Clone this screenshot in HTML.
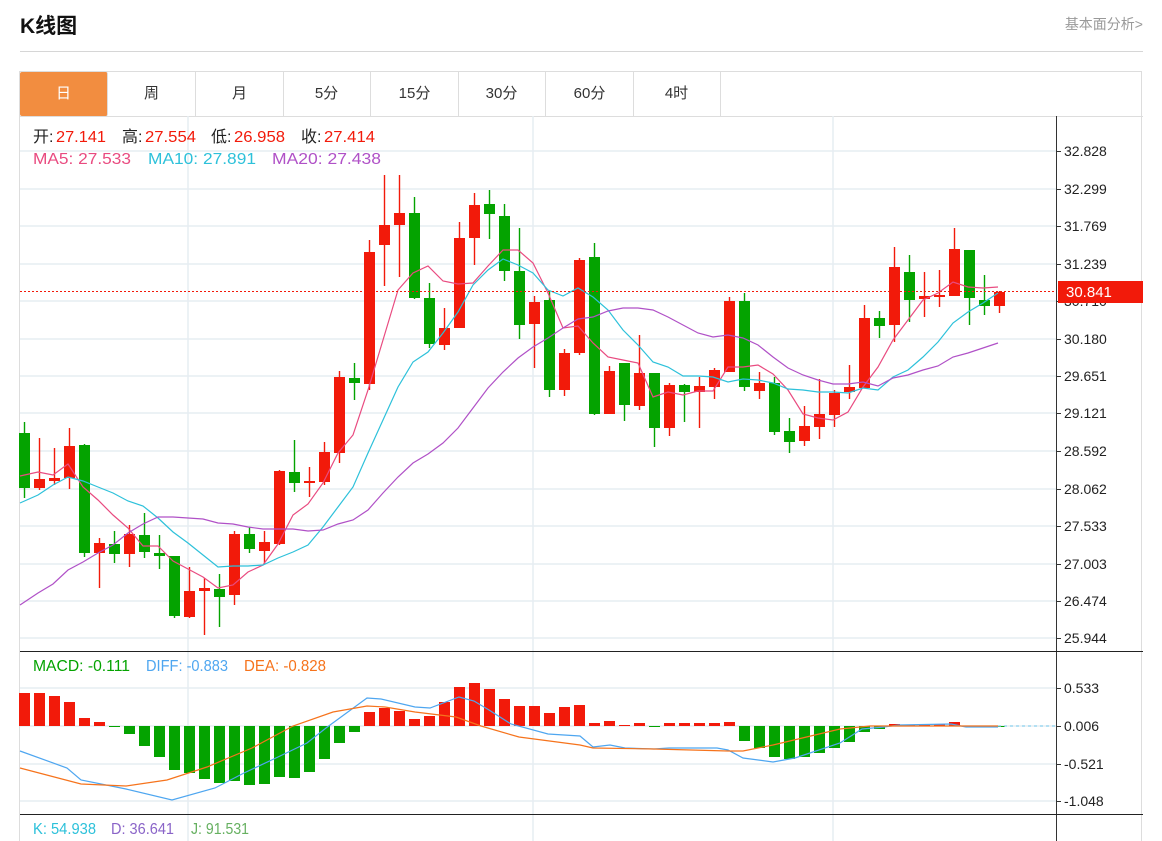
<!DOCTYPE html>
<html><head><meta charset="utf-8">
<style>
body{margin:0;background:#fff;font-family:"Liberation Sans","Noto Sans CJK SC",sans-serif;}
#wrap{position:relative;width:1162px;height:841px;overflow:hidden;}
.title{position:absolute;left:20px;top:10px;font-size:21px;font-weight:bold;color:#111;}
.more{position:absolute;right:19px;top:14px;font-size:14px;color:#999;}
.hr{position:absolute;left:20px;top:51px;width:1123px;height:1px;background:#d6d6d6;}
.box{position:absolute;left:19px;top:71px;width:1123px;height:780px;border:1px solid #ddd;box-sizing:border-box;}
.tabs{position:absolute;left:20px;top:72px;height:44px;}
.tab{position:absolute;top:0;width:87px;height:44px;line-height:44px;text-align:center;font-size:15px;color:#333;border-right:1px solid #ddd;}
.tab.on{background:#f28d40;color:#fff;border-radius:2px;}
svg{position:absolute;left:0;top:0;}
</style></head><body><div id="wrap">
<div class="title">K线图</div>
<div class="more">基本面分析&gt;</div>
<div class="hr"></div>
<div class="box"></div>
<div class="tabs">
<div class="tab on" style="left:0">日</div>
<div class="tab" style="left:88px">周</div>
<div class="tab" style="left:176px">月</div>
<div class="tab" style="left:263px">5分</div>
<div class="tab" style="left:351px">15分</div>
<div class="tab" style="left:438px">30分</div>
<div class="tab" style="left:526px">60分</div>
<div class="tab" style="left:613px">4时</div>
</div>
<svg id="s" width="1162" height="841" xmlns="http://www.w3.org/2000/svg" font-family="Liberation Sans, Noto Sans CJK SC, sans-serif">
<line x1="20" y1="116.5" x2="1143" y2="116.5" stroke="#ddd"/>
<g id="grid" stroke="#e6edf2" stroke-width="1.5"></g>
<g id="cand"></g>
<g id="lines" fill="none" stroke-width="1.2"></g>
<line x1="20" y1="291.5" x2="1056" y2="291.5" stroke="#f21a0a" stroke-dasharray="2,2"/>
<line x1="1056.5" y1="116" x2="1056.5" y2="841" stroke="#333"/>
<line x1="20" y1="651.5" x2="1143" y2="651.5" stroke="#222"/>
<line x1="20" y1="814.5" x2="1143" y2="814.5" stroke="#222"/>
<g id="axis" font-size="14" fill="#222"></g>
<rect x="1058" y="281" width="85" height="22" fill="#f21a0a"/>
<text x="1066" y="297" font-size="15" fill="#fff">30.841</text>
<g font-size="16">
<text x="33" y="142" fill="#222">开:</text><text x="56" y="142" fill="#f21a0a" textLength="50" lengthAdjust="spacingAndGlyphs">27.141</text>
<text x="122" y="142" fill="#222">高:</text><text x="145" y="142" fill="#f21a0a" textLength="51" lengthAdjust="spacingAndGlyphs">27.554</text>
<text x="211" y="142" fill="#222">低:</text><text x="234" y="142" fill="#f21a0a" textLength="51" lengthAdjust="spacingAndGlyphs">26.958</text>
<text x="301" y="142" fill="#222">收:</text><text x="324" y="142" fill="#f21a0a" textLength="51" lengthAdjust="spacingAndGlyphs">27.414</text>
<text x="33" y="164" fill="#e94b80" textLength="98" lengthAdjust="spacingAndGlyphs">MA5: 27.533</text>
<text x="148" y="164" fill="#2dc1da" textLength="108" lengthAdjust="spacingAndGlyphs">MA10: 27.891</text>
<text x="272" y="164" fill="#b051c7" textLength="109" lengthAdjust="spacingAndGlyphs">MA20: 27.438</text>
<text x="33" y="671" fill="#04a300" textLength="97" lengthAdjust="spacingAndGlyphs">MACD: -0.111</text>
<text x="146" y="671" fill="#4ea6f0" textLength="82" lengthAdjust="spacingAndGlyphs">DIFF: -0.883</text>
<text x="244" y="671" fill="#f6731c" textLength="82" lengthAdjust="spacingAndGlyphs">DEA: -0.828</text>
<text x="33" y="834" fill="#2dc1da" textLength="63" lengthAdjust="spacingAndGlyphs">K: 54.938</text>
<text x="111" y="834" fill="#8a64c8" textLength="63" lengthAdjust="spacingAndGlyphs">D: 36.641</text>
<text x="191" y="834" fill="#66b060" textLength="58" lengthAdjust="spacingAndGlyphs">J: 91.531</text>
</g>
</svg>
<script>
var NS="http://www.w3.org/2000/svg";
function el(p,t,a){var e=document.createElementNS(NS,t);for(var k in a)e.setAttribute(k,a[k]);p.appendChild(e);return e;}
var g=document.getElementById('grid');
[151,189,226,264,301,339,376,413,451,489,526,564,601,638,688,726,764,801].forEach(function(y){el(g,'line',{x1:20,y1:y,x2:1056,y2:y});});
[188,533,833].forEach(function(x){el(g,'line',{x1:x,y1:116,x2:x,y2:841});});
var ax=document.getElementById('axis');
[[151,'32.828'],[189,'32.299'],[226,'31.769'],[264,'31.239'],[301,'30.710'],[339,'30.180'],[376,'29.651'],[413,'29.121'],[451,'28.592'],[489,'28.062'],[526,'27.533'],[564,'27.003'],[601,'26.474'],[638,'25.944'],[688,'0.533'],[726,'0.006'],[764,'-0.521'],[801,'-1.048']].forEach(function(a){
 el(ax,'line',{x1:1056,y1:a[0]+.5,x2:1061,y2:a[0]+.5,stroke:'#333'});var t=el(ax,'text',{x:1064,y:a[0]+5});t.textContent=a[1];});
var R='#f21a0a',G='#04a300';
var C=[[G,433,488,422,498],[R,479,488,438,490],[R,478,481,448,485],[R,446,478,428,489],[G,445,553,444,557],[R,543,553,538,588],[G,544,554,531,563],[R,534,554,525,567],[G,535,552,513,558],[G,553,556,535,569],[G,556,616,556,618],[R,591,617,567,618],[R,588,591,578,635],[G,589,597,574,627],[R,534,595,531,605],[G,534,549,527,553],[R,542,551,531,564],[R,471,544,470,545],[G,472,483,440,492],[R,481,482,467,497],[R,452,482,442,485],[R,377,453,371,463],[G,378,383,363,400],[R,252,384,240,390],[R,225,245,175,286],[R,213,225,175,277],[G,213,298,197,299],[G,298,344,283,348],[R,328,345,308,350],[R,238,328,222,328],[R,205,238,193,265],[G,204,214,190,239],[G,216,271,204,281],[G,271,325,228,339],[R,302,324,296,368],[G,300,390,291,397],[R,353,390,349,396],[R,260,353,258,355],[G,257,414,243,415],[R,371,414,366,414],[G,363,405,363,421],[R,373,406,335,410],[G,373,428,373,447],[R,385,428,383,436],[G,385,392,384,422],[R,386,392,377,428],[R,370,387,368,399],[R,301,372,297,372],[G,301,387,293,391],[R,383,391,372,399],[G,383,432,377,435],[G,431,442,418,453],[R,426,441,406,446],[R,414,427,379,439],[R,393,415,390,427],[R,387,392,365,399],[R,318,388,305,388],[G,318,326,311,338],[R,267,325,247,342],[G,272,300,255,322],[R,296,299,272,317],[R,295,297,270,307],[R,249,296,228,296],[G,250,298,250,325],[G,300,306,275,315],[R,292,306,291,313]];
var cg=document.getElementById('cand');
C.forEach(function(c,i){var x=24+i*15;
 el(cg,'line',{x1:x+.5,y1:c[3],x2:x+.5,y2:c[4],stroke:c[0],'stroke-width':1.4});
 el(cg,'rect',{x:x-5,y:c[1],width:11,height:Math.max(2,c[2]-c[1]),fill:c[0]});});
var M=[693,693,696,702,718,722,727,734,746,757,770,773,779,783,781,785,784,777,778,772,759,743,732,712,708,711,719,716,702,687,683,689,699,706,706,713,707,705,723,721,725,723,727,723,723,723,723,722,741,748,757,759,757,753,748,742,732,729,724,725,724,724,722,727,727,726];
M.forEach(function(y,i){var x=24+i*15;var r=y<726;
 el(cg,'rect',{x:x-5,y:r?y:726,width:11,height:Math.max(1,Math.abs(y-726)),fill:r?R:G});});
var lg=document.getElementById('lines');
function pl(pts,col){el(lg,'polyline',{points:pts.map(function(p){return p.join(',')}).join(' '),stroke:col});}
pl([[20,476],[38,472],[53,475],[68,464],[83,487],[98,500],[113,515],[128,528],[143,546],[158,546],[173,561],[188,569],[203,577],[218,588],[233,585],[248,572],[263,565],[278,544],[293,515],[308,504],[323,483],[338,453],[353,435],[368,390],[383,340],[398,290],[413,273],[428,266],[443,281],[458,284],[473,283],[488,266],[503,250],[518,250],[533,263],[548,293],[563,328],[578,326],[593,343],[608,357],[623,360],[638,363],[653,397],[668,392],[683,395],[698,391],[713,391],[728,367],[743,367],[758,365],[773,374],[788,390],[803,414],[818,418],[833,420],[848,412],[863,387],[878,367],[893,340],[908,320],[923,300],[938,293],[953,282],[968,287],[983,288],[998,287]],'#e94b80');
pl([[20,503],[38,495],[53,485],[68,477],[83,481],[98,487],[113,493],[128,501],[143,506],[158,518],[173,532],[188,543],[203,555],[218,567],[233,566],[248,566],[263,565],[278,558],[293,552],[308,545],[323,527],[338,507],[353,487],[368,453],[383,420],[398,387],[413,362],[428,352],[443,333],[458,312],[473,285],[488,270],[503,259],[518,265],[533,273],[548,290],[563,296],[578,288],[593,297],[608,310],[623,330],[638,345],[653,362],[668,367],[683,376],[698,376],[713,377],[728,382],[743,379],[758,380],[773,383],[788,389],[803,390],[818,392],[833,392],[848,393],[863,388],[878,390],[893,377],[908,370],[923,357],[938,342],[953,323],[968,312],[983,303],[998,293]],'#2dc1da');
pl([[20,605],[38,593],[53,584],[68,570],[83,562],[98,553],[113,545],[128,533],[143,524],[158,517],[173,517],[188,518],[203,519],[218,523],[233,524],[248,527],[263,529],[278,529],[293,529],[308,531],[323,530],[338,524],[353,520],[368,510],[383,493],[398,477],[413,463],[428,454],[443,443],[458,428],[473,408],[488,388],[503,372],[518,358],[533,347],[548,338],[563,328],[578,319],[593,317],[608,311],[623,308],[638,308],[653,310],[668,317],[683,325],[698,333],[713,337],[728,335],[743,338],[758,345],[773,357],[788,368],[803,375],[818,380],[833,384],[848,384],[863,382],[878,386],[893,378],[908,375],[923,370],[938,366],[953,357],[968,353],[983,348],[998,343]],'#b051c7');
el(lg,'line',{x1:998,y1:726,x2:1056,y2:726,stroke:'#8fd3f0','stroke-dasharray':'3,3'});
pl([[20,751],[67,768],[81,780],[126,789],[172,800],[215,788],[244,773],[278,757],[307,743],[326,728],[341,717],[367,698],[381,699],[415,707],[430,708],[459,697],[474,701],[489,710],[511,724],[548,734],[580,736],[593,747],[610,745],[625,748],[654,749],[669,748],[717,748],[728,750],[743,758],[773,762],[795,758],[840,743],[862,729],[884,727],[899,725],[951,724],[966,727],[998,727]],'#4ea6f0');
pl([[20,768],[81,784],[126,786],[167,780],[207,767],[252,748],[293,726],[333,712],[367,706],[385,707],[415,712],[456,717],[481,726],[519,737],[580,745],[593,748],[654,749],[728,751],[743,751],[773,745],[840,729],[870,726],[914,726],[998,726]],'#f6731c');
</script>
</div></body></html>
